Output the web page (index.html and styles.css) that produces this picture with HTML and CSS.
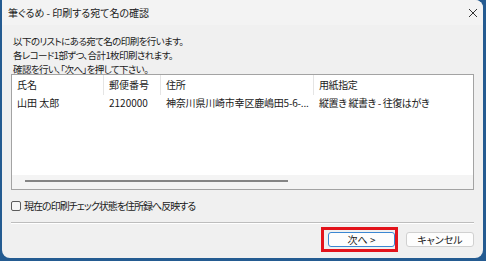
FILE: index.html
```html
<!DOCTYPE html>
<html lang="ja">
<head>
    <meta charset="UTF-8">
    <title>筆ぐるめ - 印刷する宛て名の確認</title>
    <link rel="stylesheet" href="styles.css">
</head>
<body>
    <div class="window">
        <div class="titlebar">
            <span class="title">筆ぐるめ - 印刷する宛て名の確認</span>
            <svg class="close" width="10" height="10" viewBox="0 0 10 10">
                <path d="M1 1 L9 9 M9 1 L1 9" stroke="#333" stroke-width="1" fill="none"/>
            </svg>
        </div>
        <div class="content">
            <div class="message">
                <p>以下のリストにある宛て名の印刷を行います。</p>
                <p>各レコード1部ずつ、合計1枚印刷されます。</p>
                <p>確認を行い、「次へ」を押して下さい。</p>
            </div>
            <div class="list">
                <div class="row head">
                    <div class="col c1">氏名</div>
                    <div class="col c2">郵便番号</div>
                    <div class="col c3">住所</div>
                    <div class="col c4">用紙指定</div>
                </div>
                <div class="row item">
                    <div class="col c1">山田 太郎</div>
                    <div class="col c2">2120000</div>
                    <div class="col c3">神奈川県川崎市幸区鹿嶋田5-6-...</div>
                    <div class="col c4">縦置き 縦書き - 往復はがき</div>
                </div>
                <div class="spacer"></div>
                <div class="hscroll"><div class="thumb"></div></div>
            </div>
            <label class="check">
                <span class="box"></span>
                <span class="check-text">現在の印刷チェック状態を住所録へ反映する</span>
            </label>
            <div class="sep"></div>
            <div class="buttons">
                <div class="mark">
                    <button type="button" class="btn default">次へ &gt;</button>
                </div>
                <button type="button" class="btn">キャンセル</button>
            </div>
        </div>
    </div>
</body>
</html>
```

FILE: styles.css
```css
*{
    margin: 0;
    padding: 0;
    box-sizing: border-box;
}
html,body{
    width: 486px;
    height: 261px;
    overflow: hidden;
}
body{
    background-color: #245b91;
    font-family: "Noto Sans CJK JP", "Noto Sans", sans-serif;
    font-feature-settings: "palt";
    font-size: 10px;
    color: #1a1a1a;
}
.window{
    margin-left: 2px;
    width: 481px;
    height: 258px;
    background-color: #f0f0f0;
    border-radius: 0 8px 8px 8px;
    overflow: hidden;
    display: flex;
    flex-direction: column;
}
.titlebar{
    height: 25px;
    flex-shrink: 0;
    background-color: #f3f3f3;
    display: flex;
    align-items: center;
    justify-content: space-between;
    padding: 0 5px 0 6px;
}
.title{
    line-height: 25px;
}
.content{
    padding: 0 9px;
    display: flex;
    flex-direction: column;
}
.message{
    margin-top: 9px;
    height: 40px;
    padding-left: 2px;
    font-size: 9.5px;
    line-height: 14px;
    letter-spacing: -0.6px;
}
.list{
    height: 116px;
    background-color: #fff;
    border: 1px solid #a3a3a3;
    display: flex;
    flex-direction: column;
}
.row{
    display: flex;
}
.head{
    height: 20px;
}
.head .col{
    line-height: 20px;
    border-right: 1px solid #e5e5e5;
}
.item{
    height: 16px;
}
.item .col{
    line-height: 16px;
}
.col{
    padding-left: 5px;
    white-space: nowrap;
    overflow: hidden;
}
.c1{
    width: 92px;
}
.c2{
    width: 57px;
}
.c3{
    width: 153px;
    letter-spacing: -0.2px;
}
.head .c4{
    border-right: none;
}
.c4{
    flex: 1;
    letter-spacing: -0.4px;
}
.spacer{
    flex: 1;
}
.hscroll{
    height: 14px;
    background-color: #f4f4f4;
    padding: 5px 0 0 13px;
}
.thumb{
    width: 263px;
    height: 2px;
    background-color: #858585;
}
.check{
    margin-top: 10px;
    height: 12px;
    line-height: 12px;
    display: flex;
    align-items: center;
    gap: 3px;
}
.check-text{
    letter-spacing: -1px;
}
.box{
    width: 10px;
    height: 10px;
    border: 1px solid #5c5c5c;
    border-radius: 2px;
    background-color: #f7f7f7;
}
.sep{
    margin-top: 10px;
    height: 2px;
    border-top: 1px solid #bdbdbd;
    border-bottom: 1px solid #fff;
}
.buttons{
    margin-top: 3px;
    display: flex;
    justify-content: flex-end;
    align-items: center;
    gap: 8px;
}
.mark{
    border: 3px solid #e3131b;
    padding: 2px;
    width: 77px;
    height: 25px;
}
.btn{
    width: 68px;
    height: 15px;
    font-family: inherit;
    font-feature-settings: "palt";
    font-size: 10px;
    line-height: 13px;
    color: #1a1a1a;
    background-color: #fdfdfd;
    border: 1px solid #d0d0d0;
    border-radius: 3px;
}
.mark .btn{
    width: 67px;
    margin-left: 2px;
}
.default{
    border-color: #3b87d2;
}
```
